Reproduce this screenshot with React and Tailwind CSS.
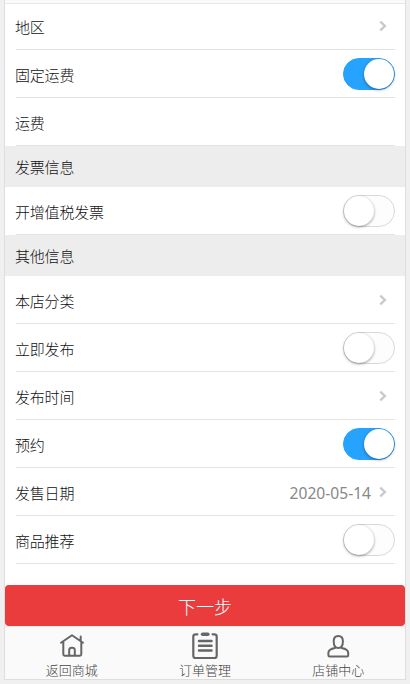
import React, { useState } from 'react';

const initialFields = [
    { id: 'region', label: '地区', type: 'link' },
    { id: 'fixedFreight', label: '固定运费', type: 'switch', on: true },
    { id: 'freight', label: '运费', type: 'input' },
    { id: 'invoiceTitle', label: '发票信息', type: 'section' },
    { id: 'vat', label: '开增值税发票', type: 'switch', on: false },
    { id: 'otherTitle', label: '其他信息', type: 'section' },
    { id: 'category', label: '本店分类', type: 'link' },
    { id: 'publishNow', label: '立即发布', type: 'switch', on: false },
    { id: 'publishTime', label: '发布时间', type: 'link' },
    { id: 'booking', label: '预约', type: 'switch', on: true },
    { id: 'saleDate', label: '发售日期', type: 'link', value: '2020-05-14' },
    { id: 'recommend', label: '商品推荐', type: 'switch', on: false },
];

const Switch = ({ on, onClick, label }) => (
    <button
        type="button"
        role="switch"
        aria-checked={on}
        aria-label={label}
        onClick={onClick}
        className={`flex h-8 w-[52px] rounded-full border ${on ? 'justify-end border-[#26a2ff] bg-[#26a2ff]' : 'justify-start border-[#d9d9d9] bg-[#fdfdfd]'}`}
    >
        <span className="size-[30px] rounded-full bg-white shadow-[0_1px_3px_rgba(0,0,0,0.4)]" />
    </button>
);

const Arrow = () => (
    <svg className="mr-2 ml-2 h-3 w-2" viewBox="0 0 8 12" fill="none" stroke="#c8c8cd" strokeWidth="2.3">
        <path d="M1.3 1.6 5.9 6 1.3 10.4" />
    </svg>
);

const HomeIcon = () => (
    <svg className="h-7 w-7" viewBox="0 0 28 28" fill="none" stroke="#666" strokeWidth="2" strokeLinecap="round" strokeLinejoin="round">
        <path d="M3 11.8 14 4.2l11 7.6M5.3 11v12.3q0 1.4 1.4 1.4h15.2q1.4 0 1.4-1.4V11M22.7 5.5v4.3" />
        <path d="M11.2 24v-4.8q0-2.4 2.8-2.4t2.8 2.4V24" />
    </svg>
);

const OrderIcon = () => (
    <svg className="h-7 w-7" viewBox="0 0 28 28" fill="none" stroke="#666" strokeWidth="2.2" strokeLinecap="round" strokeLinejoin="round">
        <path d="M6.4 3.3H4.6Q2.3 3.3 2.3 5.6v19.2q0 2.3 2.3 2.3h18.8q2.3 0 2.3-2.3V5.6q0-2.3-2.3-2.3h-1.8" />
        <path d="M11.6 3.2h5.2" strokeWidth="3.6" />
        <path d="M8 10h12.5M8 14.7h12.5M8 19.5h12.5" strokeWidth="2.5" />
    </svg>
);

const UserIcon = () => (
    <svg className="h-7 w-7" viewBox="0 0 28 28" fill="none" stroke="#666" strokeWidth="2" strokeLinecap="round" strokeLinejoin="round">
        <path d="M14.3 5c-3.2 0-4.6 2-4.6 5.3 0 3.5 1.3 6.8 4.6 6.8s4.6-3.3 4.6-6.8c0-3.3-1.4-5.3-4.6-5.3Z" />
        <path d="M11 16.9c-3.8.7-6.6 1.7-6.6 4.8v2.5q0 1.3 1.3 1.3h17.2q1.3 0 1.3-1.3v-2.5c0-3.1-2.8-4.1-6.6-4.8" />
    </svg>
);

const tabs = [
    { label: '返回商城', icon: HomeIcon },
    { label: '订单管理', icon: OrderIcon },
    { label: '店铺中心', icon: UserIcon },
];

const App = () => {
    const [fields, setFields] = useState(initialFields);

    const toggle = (id) => {
        setFields(prev => prev.map(f => (f.id === id ? { ...f, on: !f.on } : f)));
    };

    return (
        <div className="h-[684px] overflow-hidden bg-[#f0f0f0] pr-1 pl-1 font-['Noto_Sans','Noto_Sans_CJK_SC',sans-serif] text-[15px] font-light text-[#111]">
            <div className="flex h-[680px] flex-col border-x border-b border-[#dedede] bg-white">
                <div className="h-1 shrink-0 border-b border-[#e8e8e8] bg-[#fafafa]" />

                {/* Form */}
                <div className="-mt-0.5 h-[583px] shrink-0">
                    {fields.map(f => f.type === 'section' ? (
                        <h2 key={f.id} className="flex h-[41px] items-center bg-[#ededed] px-2.5 pt-0.5 font-light tracking-[-0.2px]">{f.label}</h2>
                    ) : (
                        <div key={f.id} className="pr-2.5 pl-[11px]">
                            <div className="flex h-12 items-center justify-between border-b border-[#e2e2e2] pt-px">
                                <span className="-ml-px pt-0.5 leading-5 tracking-[-0.2px]">{f.label}</span>
                                {f.type === 'switch' && <Switch on={f.on} label={f.label} onClick={() => toggle(f.id)} />}
                                {f.type === 'link' && (
                                    <span className="flex items-center text-[15.6px] font-normal text-[#888]">
                                        <span className="pt-0.5 leading-5">{f.value}</span>
                                        <Arrow />
                                    </span>
                                )}
                            </div>
                        </div>
                    ))}
                </div>

                <button type="button" className="h-[41px] shrink-0 rounded-[4px] bg-[#ea3b3d] pt-0.5 text-lg font-light text-white">下一步</button>

                {/* Bottom tabs */}
                <nav className="flex flex-1 border-t border-[#eaeaea] bg-[#fafafa] text-[13px] text-[#444]">
                    {tabs.map(({ label, icon: Icon }) => (
                        <a key={label} href="#" className="flex flex-1 flex-col items-center pt-1">
                            <Icon />
                            <span className="mt-0.5 leading-[18px]">{label}</span>
                        </a>
                    ))}
                </nav>
            </div>
        </div>
    );
};

export default App;
